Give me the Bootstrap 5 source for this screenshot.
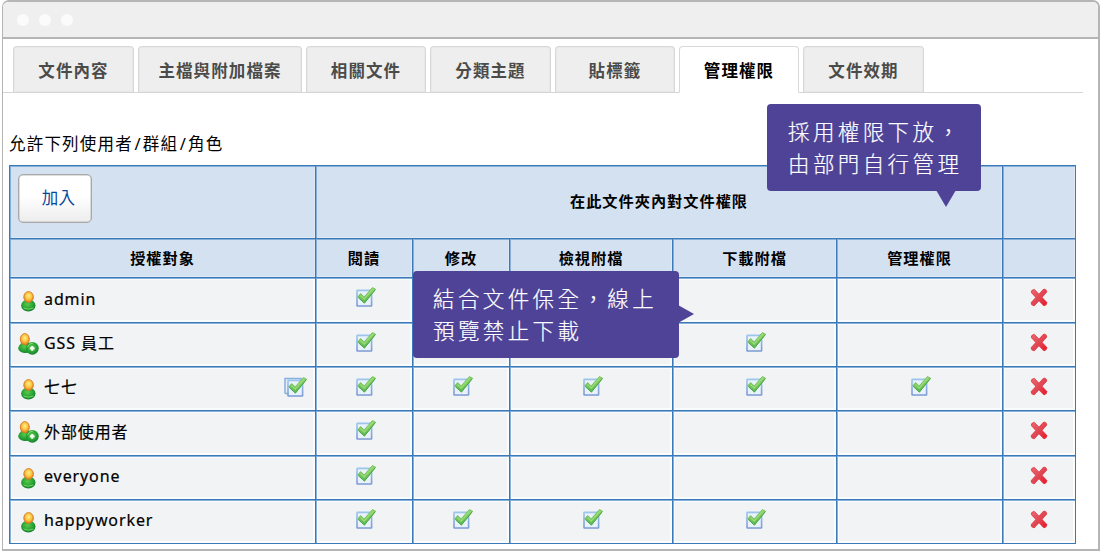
<!DOCTYPE html>
<html lang="zh-Hant">
<head>
<meta charset="utf-8">
<meta name="viewport" content="width=device-width, initial-scale=1">
<title>管理權限</title>
<link href="https://cdn.jsdelivr.net/npm/bootstrap@5.3.0/dist/css/bootstrap.min.css" rel="stylesheet">
<style>
  body { font-family: "Noto Sans", "Noto Sans CJK TC", sans-serif; font-size: 16px; color: #000; line-height: 1.25; background: #fff; overflow: hidden; }
  .app-window { width: 1098px; height: 551px; margin-left: 2px; border: 2px solid #b5b5b5; border-left-width: 1.5px; border-radius: 7px 7px 0 0; background: #fff; }
  .app-bar { height: 37px; background: #efefef; border-bottom: 2px solid #b5b5b5; border-radius: 5px 5px 0 0; padding-left: 14px; gap: 10px; }
  .dot { width: 12px; height: 12px; border-radius: 50%; background: #fbfbfb; }
  .doc-tabs { width: 1080px; height: 54px; padding: 7px 0 0 10px; gap: 4px; border-bottom: 1px solid #d3d6d5; flex-wrap: nowrap; --bs-nav-tabs-border-width: 1px; }
  .doc-tabs .nav-item { width: 120px; }
  .doc-tabs .tab-a { width: 121px; }
  .doc-tabs .tab-b { width: 164px; }
  .doc-tabs .nav-link { height: 47px; padding: 0; line-height: 47px; text-align: center; color: #4b4b49; font-weight: 700; font-size: 16.5px; letter-spacing: 1.1px; background: #eee; border: 1px solid #d6d9d8; border-bottom-color: #d3d6d5; border-radius: 4px 4px 0 0; box-shadow: inset 0 0 0 1px #e7e9e8; white-space: nowrap; }
  .doc-tabs .nav-link.active { color: #000; background: #fff; border-color: #d6d9d8; border-bottom-color: #fff; box-shadow: none; }
  .allow-line { font-size: 16.5px; letter-spacing: 1.2px; padding: 40px 0 0 6px; height: 72px; line-height: 22px; }
  .allow-line span { padding: 0 1px 0 1.5px; }
  .perm-wrap { margin-left: 6px; width: 1067px; }
  .perm { width: 1067px; table-layout: fixed; border-collapse: separate; border-spacing: 0; border-top: 1px solid #3b79b9; border-left: 1px solid #3b79b9; }
  .perm th, .perm td { padding: 0; border: 0 solid #3b79b9; border-width: 0 1px 1px 0; vertical-align: middle; box-shadow: inset 1px 1px 0 #86afd9, inset 0 0 0 2px #fafbfb; background: #f1f3f4; }
  .perm th { background: #d4e1f0; text-align: center; font-weight: 700; font-size: 15.2px; letter-spacing: 1px; box-shadow: inset 1px 1px 0 #86afd9, inset -1px -1px 0 #dfeaf5; }
  .perm tr:first-child th { padding-bottom: 2px; }
  .perm td.chk { text-align: center; padding: 0 0 6px 4px; }
  .perm td.chk-r { padding-left: 2px; }
  .perm td.chk-x { padding: 0 1px 4px 0; }
  .perm td svg { display: inline-block; vertical-align: top; }
  .who { padding: 0 8px 2px 8px; letter-spacing: .9px; }
  .who svg { margin-right: 5px; }
  .who span { margin-top: -1px; -webkit-text-stroke: .2px #000; }
  .add-btn { width: 74px; height: 49px; padding: 0 0 0 7px; margin: -5px 0 0 8px; border: 1px solid #a9a9a9; border-radius: 5px; background: linear-gradient(#fff 45%, #ececec); box-shadow: inset 0 0 0 .5px #bbb; color: #07479b; font-size: 16.5px; letter-spacing: .3px; }
  .callout { position: absolute; background: #4e4397; color: #fff; border-radius: 4px; font-weight: 300; font-size: 21.5px; letter-spacing: 3.4px; -webkit-text-stroke: .2px #fff; line-height: 31.5px; white-space: nowrap; padding: 12px 0 0 21px; height: 87px; }
  .callout::after { content: ""; position: absolute; border: solid transparent; }
  .callout-down { left: 767px; top: 104px; width: 214px; }
  .callout-down::after { left: 169px; top: 86px; border-width: 17px 10px 0; border-top-color: #4e4397; }
  .callout-right { left: 413px; top: 271px; width: 266px; padding-left: 20px; }
  .callout-right::after { left: 265px; top: 34px; border-width: 9px 0 9px 16px; border-left-color: #4e4397; }
</style>
</head>
<body>
<svg width="0" height="0" class="position-absolute" aria-hidden="true">
  <defs>
    <linearGradient id="gBox" x1="0" y1="0" x2="0" y2="1"><stop offset="0" stop-color="#9cc6ec"/><stop offset="1" stop-color="#7c9ad6"/></linearGradient>
    <linearGradient id="gTick" x1="0" y1="0" x2="0" y2="1"><stop offset="0" stop-color="#94d56c"/><stop offset="1" stop-color="#5ab850"/></linearGradient>
    <radialGradient id="gHead" cx=".5" cy=".4" r=".6"><stop offset="0" stop-color="#fff08a"/><stop offset=".55" stop-color="#fcc33c"/><stop offset="1" stop-color="#de7418"/></radialGradient>
    <radialGradient id="gBody" cx=".45" cy=".4" r=".65"><stop offset="0" stop-color="#5cc94a"/><stop offset=".6" stop-color="#27a335"/><stop offset="1" stop-color="#11782a"/></radialGradient>
    <linearGradient id="gX" x1="0" y1="0" x2="1" y2="1"><stop offset="0" stop-color="#ee6a72"/><stop offset=".55" stop-color="#e04450"/><stop offset="1" stop-color="#ec0f25"/></linearGradient>
    <symbol id="check" viewBox="0 0 20 20">
      <rect x="1" y="3.4" width="14.6" height="15.6" rx=".5" fill="#e9f1fb" stroke="url(#gBox)" stroke-width="1.6"/>
      <path d="M1.8 9.8 4.6 6.6 8.2 9.9 16.4.6 19.6 2.2 8.4 16Z" fill="url(#gTick)" stroke="#74c05e" stroke-width=".9" stroke-linejoin="round"/>
      <path d="M4.4 8.6 8.2 12 17 1.9" fill="none" stroke="#9bdb77" stroke-width="1.4"/>
      <path d="M2.4 10.7 8.4 16.1 19.2 2.8" fill="none" stroke="#3fa447" stroke-width=".9"/>
    </symbol>
    <symbol id="user" viewBox="0 0 20 21">
      <ellipse cx="9.8" cy="14.4" rx="7.2" ry="6" fill="url(#gBody)"/>
      <path d="M5 17q5 2.4 10 0" fill="none" stroke="#7bda6a" stroke-width=".9"/>
      <ellipse cx="10.1" cy="6" rx="4.8" ry="5.4" fill="url(#gHead)" stroke="#d77a2a" stroke-width=".9"/>
    </symbol>
    <symbol id="usergroup" viewBox="0 0 21 22">
      <path d="M.2 15.5Q1.6 9 7 9t7.5 5Q12 20.6 6.5 20T.2 15.5Z" fill="url(#gBody)"/>
      <ellipse cx="6.8" cy="6.2" rx="4.5" ry="5.6" fill="url(#gHead)" stroke="#d77a2a" stroke-width=".9"/>
      <circle cx="14.3" cy="15.3" r="6.4" fill="url(#gBody)"/>
      <path d="M9.5 14Q11 10.2 15 10" fill="none" stroke="#86dd76" stroke-width="1"/>
      <path d="M14.2 13v4.8M11.8 15.4h4.8" stroke="#f4fff0" stroke-width="2.1"/>
    </symbol>
    <symbol id="remove" viewBox="0 0 18 19">
      <path d="M3.5 3.8 14.4 15.4M14.4 3.4 3.5 15.4" fill="none" stroke="#e34a55" stroke-width="5" stroke-linecap="round"/>
      <path d="M1.1 4 4.2 1.2 9 6.2 14 .9 17 3.8 12 9.2 17.2 14.8 14.2 18.1 9 12.6 4 18.1 1 14.8 6 9.3Z" fill="url(#gX)" stroke="#df4450" stroke-width=".5" stroke-linejoin="round"/>
    </symbol>
  </defs>
</svg>

<main class="app-window">
  <header class="app-bar d-flex align-items-center"><span class="dot"></span><span class="dot"></span><span class="dot"></span></header>
  <ul class="nav nav-tabs doc-tabs">
    <li class="nav-item tab-a"><a class="nav-link">文件內容</a></li>
    <li class="nav-item tab-b"><a class="nav-link">主檔與附加檔案</a></li>
    <li class="nav-item"><a class="nav-link">相關文件</a></li>
    <li class="nav-item tab-a"><a class="nav-link">分類主題</a></li>
    <li class="nav-item"><a class="nav-link">貼標籤</a></li>
    <li class="nav-item"><a class="nav-link active">管理權限</a></li>
    <li class="nav-item tab-a"><a class="nav-link">文件效期</a></li>
  </ul>
  <div class="allow-line">允許下列使用者<span>/</span>群組<span>/</span>角色</div>
  <div class="perm-wrap">
    <table class="perm">
      <colgroup><col style="width:306px"><col style="width:97px"><col style="width:97px"><col style="width:163px"><col style="width:164px"><col style="width:166px"><col style="width:73px"></colgroup>
      <thead>
        <tr style="height:73px"><th class="text-start"><button class="btn add-btn">加入</button></th><th colspan="5">在此文件夾內對文件權限</th><th></th></tr>
        <tr style="height:39px"><th>授權對象</th><th>閱讀</th><th>修改</th><th>檢視附檔</th><th>下載附檔</th><th>管理權限</th><th></th></tr>
      </thead>
      <tbody id="rows"></tbody>
    </table>
  </div>
</main>

<div class="callout callout-down">採用權限下放，<br>由部門自行管理</div>
<div class="callout callout-right">結合文件保全，線上<br>預覽禁止下載</div>

<script src="https://cdn.jsdelivr.net/npm/bootstrap@5.3.0/dist/js/bootstrap.bundle.min.js"></script>
<script>
  const people = [
    { name: 'admin', h: 45, on: [1, 0, 0, 0, 0] },
    { name: 'GSS 員工', group: true, h: 44, on: [1, 0, 0, 1, 0] },
    { name: '七七', all: true, h: 44, on: [1, 1, 1, 1, 1] },
    { name: '外部使用者', group: true, h: 45, on: [1, 0, 0, 0, 0] },
    { name: 'everyone', h: 44, on: [1, 0, 0, 0, 0] },
    { name: 'happyworker', h: 44, on: [1, 1, 1, 1, 0] }
  ];
  const tick = '<svg width="20" height="20"><use href="#check"/></svg>';
  const tickAll = '<svg class="ms-auto me-0" width="23" height="21" viewBox="0 0 23 21"><path d="M1 16.5V1.5H17V5" fill="#e6effa" stroke="#87b0e0" stroke-width="1.5"/><path d="M1 16.5H4" stroke="#87b0e0" stroke-width="1.5"/><use href="#check" x="3" y="0" width="20" height="20"/></svg>';
  document.getElementById('rows').innerHTML = people.map(p => `
    <tr style="height:${p.h}px">
      <td><div class="who d-flex align-items-center">${p.group
        ? '<svg width="21" height="22"><use href="#usergroup"/></svg>'
        : '<svg class="mt-1" width="21" height="21"><use href="#user"/></svg>'}<span>${p.name}</span>${p.all ? tickAll : ''}</div></td>
      ${p.on.map((v, i) => `<td class="chk ${i > 2 ? 'chk-r' : ''}">${v ? tick : ''}</td>`).join('')}
      <td class="chk chk-x"><svg width="18" height="19"><use href="#remove"/></svg></td>
    </tr>`).join('');
</script>
</body>
</html>
